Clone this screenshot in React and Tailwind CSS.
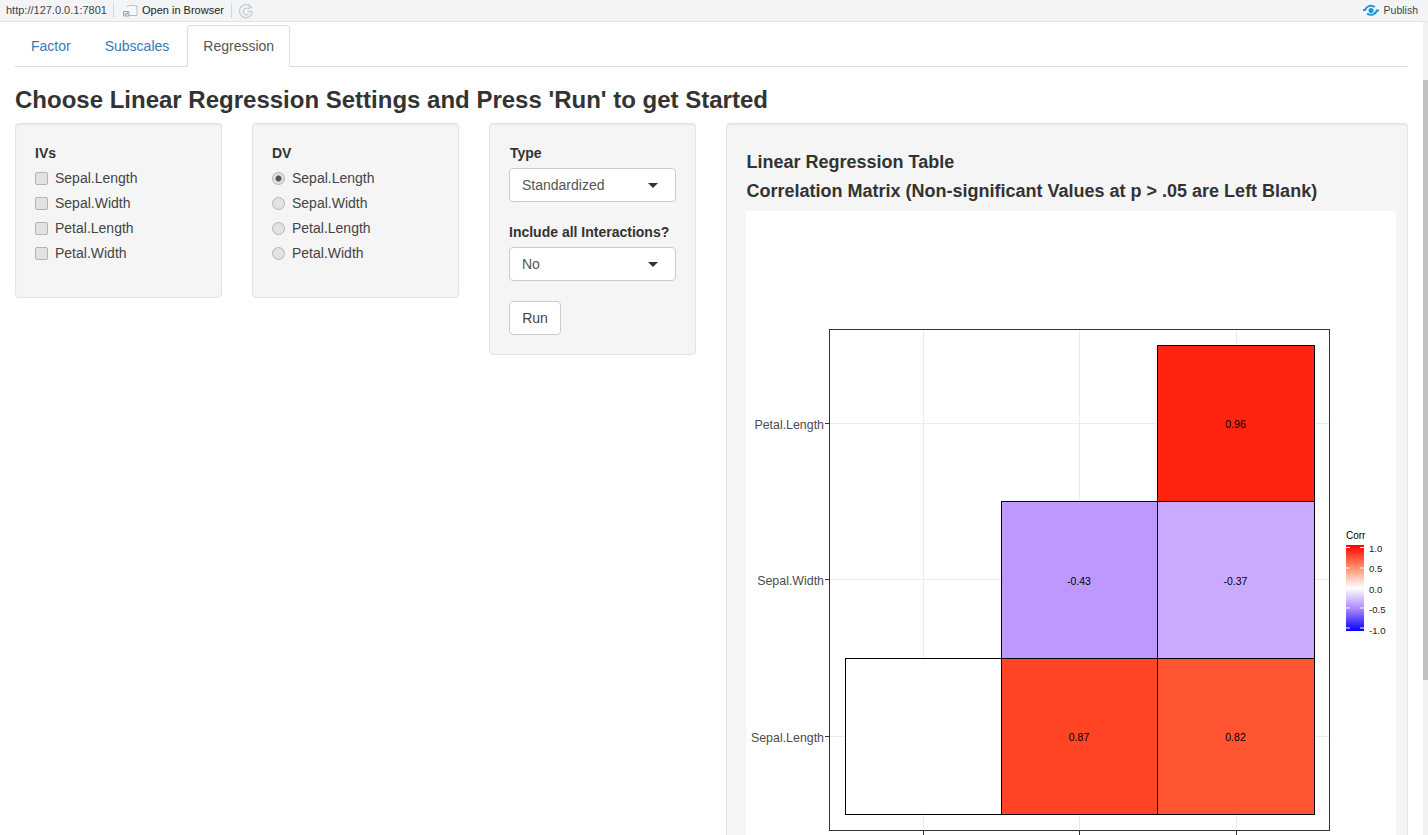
import React from 'react';

const variables = ['Sepal.Length', 'Sepal.Width', 'Petal.Length', 'Petal.Width'];

const Toolbar = () => (
  <div className="h-[22px] bg-[#f3f4f5] border-b border-[#e3e4e6] flex items-center text-[11px] text-[#222] shrink-0">
    <span className="ml-[6px] w-[100px] whitespace-nowrap text-[#444]">http://127.0.0.1:7801</span>
    <span className="ml-[7px] w-px h-[15px] bg-[#d5d6d8]" />
    {/* browser icon */}
    <svg width="16" height="14" viewBox="0 0 16 14" className="ml-[8px]" fill="none">
      <path d="M5 2.5 C6.5 1.2 12.5 1 15 2 L15 11.5 L5 11.5" stroke="#b3bec7" fill="#f7f9fa" />
      <path d="M1.5 7.5 h5.5 v4.5 h-5.5 z" stroke="#9aa7b1" fill="#dfe6ea" />
      <path d="M3 11 L6 8.5" stroke="#7f8e99" />
    </svg>
    <span className="ml-[4px] w-[82px] whitespace-nowrap">Open in Browser</span>
    <span className="ml-[7px] w-px h-[15px] bg-[#d5d6d8]" />
    {/* republish icon */}
    <svg width="16" height="16" viewBox="0 0 16 16" className="ml-[6px]" fill="none" stroke="#c6ccd1" strokeWidth="1.3">
      <path d="M13 4 A6.5 6.5 0 1 0 14.5 9" />
      <path d="M9.5 8.5 h5" />
      <path d="M10 1.5 L13.5 4.5 L9.5 5.5" />
      <path d="M9.5 5.5 A3.2 3.2 0 1 0 10.5 11" />
    </svg>
    <div className="ml-auto flex items-center mr-[10px]">
      <svg width="16" height="13" viewBox="0 0 16 13" fill="none" stroke="#1b95d6" strokeWidth="2">
        <path d="M0 6 H2 C4 1.5 8 0.5 12 3" />
        <path d="M16 6.5 H14 C12 11 8 12 4 9.5" />
        <circle cx="8" cy="6.5" r="2.5" fill="#1b95d6" stroke="none" />
      </svg>
      <span className="ml-[5px] text-[10.5px] text-[#444]">Publish</span>
    </div>
  </div>
);

const Tabs = () => (
  <div className="flex h-[42px] mt-[3px] border-b border-[#ddd] text-[14px] leading-[20px]">
    <a className="px-[16px] pt-[11px] mr-[2px] text-[#337ab7]">Factor</a>
    <a className="px-[16px] pt-[11px] mr-[2px] text-[#337ab7]">Subscales</a>
    <a className="h-[42px] px-[15px] pt-[10px] bg-white border border-[#ddd] border-b-transparent rounded-t-[4px] text-[#555]">Regression</a>
  </div>
);

const OptionGroup = ({ title, type }) => (
  <div className="w-[207px] h-[175px] shrink-0 bg-[#f5f5f5] border border-[#e3e3e3] rounded-[4px] pt-[19px] px-[19px] shadow-[inset_0_1px_1px_rgba(0,0,0,0.05)]">
    <div className="font-bold leading-[20px] mb-[5px]">{title}</div>
    <div className="flex flex-col gap-[5px]">
      {variables.map((v, i) => (
        <label key={v} className="flex items-center h-[20px] leading-[20px] text-[#444]">
          {type === 'radio' ? (
            <input
              type="radio"
              name="dv"
              defaultChecked={i === 0}
              className="appearance-none w-[13px] h-[13px] rounded-full border border-[#b4b4b4] bg-[#e2e2e2] checked:bg-[radial-gradient(circle,#555_0,#555_32%,#e0e0e0_45%)]"
            />
          ) : (
            <input
              type="checkbox"
              className="appearance-none w-[13px] h-[13px] rounded-[2px] border border-[#b4b4b4] bg-[#e2e2e2]"
            />
          )}
          <span className="ml-[7px]">{v}</span>
        </label>
      ))}
    </div>
  </div>
);

const FakeSelect = ({ value }) => (
  <div className="w-[167px] h-[34px] bg-white border border-[#ccc] rounded-[4px] flex items-center justify-between pl-[12px] pr-[17px] text-[#555]">
    <span>{value}</span>
    <span className="w-0 h-0 border-x-[5px] border-x-transparent border-t-[5px] border-t-[#333]" />
  </div>
);

const SettingsPanel = () => (
  <div className="w-[207px] h-[232px] shrink-0 bg-[#f5f5f5] border border-[#e3e3e3] rounded-[4px] pt-[19px] px-[19px] shadow-[inset_0_1px_1px_rgba(0,0,0,0.05)]">
    <div className="font-bold leading-[20px] mb-[5px] pl-px">Type</div>
    <FakeSelect value="Standardized" />
    <div className="font-bold leading-[20px] mt-[20px] mb-[5px]">Include all Interactions?</div>
    <FakeSelect value="No" />
    <button className="mt-[20px] w-[52px] h-[34px] bg-white border border-[#ccc] rounded-[4px] text-[#444]">Run</button>
  </div>
);

const tiles = [
  { x: 1157.5, y: 345.5, w: 157, h: 156, fill: '#ff2410', label: '0.96' },
  { x: 1001.5, y: 501.5, w: 156, h: 157, fill: '#bd98ff', label: '-0.43' },
  { x: 1157.5, y: 501.5, w: 157, h: 157, fill: '#c9aaff', label: '-0.37' },
  { x: 845.5, y: 658.5, w: 156, h: 156, fill: '#ffffff', label: '' },
  { x: 1001.5, y: 658.5, w: 156, h: 156, fill: '#ff4526', label: '0.87' },
  { x: 1157.5, y: 658.5, w: 157, h: 156, fill: '#ff5432', label: '0.82' },
];

const yAxis = [
  { y: 423.5, label: 'Petal.Length' },
  { y: 579.5, label: 'Sepal.Width' },
  { y: 736.5, label: 'Sepal.Length' },
];

const legendTicks = [
  { y: 547.5, text: 552, label: '1.0' },
  { y: 568, text: 571.5, label: '0.5' },
  { y: 588, text: 592.5, label: '0.0' },
  { y: 608, text: 613, label: '-0.5' },
  { y: 628, text: 633.5, label: '-1.0' },
];

// Correlation heatmap drawn in page coordinates
const CorrPlot = () => (
  <svg
    viewBox="746 211 650 650"
    className="block w-[650px] h-[650px] bg-white"
    fontFamily="'Liberation Sans', Arial, sans-serif"
  >
    <defs>
      <linearGradient id="corr" x1="0" y1="0" x2="0" y2="1">
        <stop offset="0" stopColor="#ff0000" />
        <stop offset="0.25" stopColor="#ff8a66" />
        <stop offset="0.5" stopColor="#ffffff" />
        <stop offset="0.75" stopColor="#a884ff" />
        <stop offset="1" stopColor="#0000ff" />
      </linearGradient>
    </defs>
    {[923.5, 1079.5, 1236.5].map((x) => (
      <line key={x} x1={x} x2={x} y1="329" y2="830" stroke="#ebebeb" />
    ))}
    {yAxis.map((a) => (
      <line key={a.y} x1="829" x2="1329" y1={a.y} y2={a.y} stroke="#ebebeb" />
    ))}
    {tiles.map((t) => (
      <g key={t.x + '-' + t.y}>
        <rect x={t.x} y={t.y} width={t.w} height={t.h} fill={t.fill} stroke="#000" />
        <text x={t.x + t.w / 2 - 0.5} y={t.y + t.h / 2 + 4.5} textAnchor="middle" fontSize="10.5" fill="#000">{t.label}</text>
      </g>
    ))}
    <rect x="829.5" y="329.5" width="500" height="501" fill="none" stroke="#333" />
    {yAxis.map((a) => (
      <g key={a.label}>
        <line x1="825" x2="829" y1={a.y} y2={a.y} stroke="#333" />
        <text x="824" y={a.y + 5} textAnchor="end" fontSize="12.4" fill="#4d4d4d">{a.label}</text>
      </g>
    ))}
    {[923.5, 1079.5, 1236.5].map((x) => (
      <line key={x} x1={x} x2={x} y1="831" y2="835" stroke="#333" />
    ))}
    <text x="1346" y="539" fontSize="10" fill="#000">Corr</text>
    <rect x="1346" y="545" width="18" height="86" fill="url(#corr)" />
    {legendTicks.map((t) => (
      <g key={t.label}>
        <line x1="1346" x2="1350" y1={t.y} y2={t.y} stroke="#fff" />
        <line x1="1360" x2="1364" y1={t.y} y2={t.y} stroke="#fff" />
        <text x="1369" y={t.text} fontSize="9.6" fill="#222">{t.label}</text>
      </g>
    ))}
  </svg>
);

const ResultsPanel = () => (
  <div className="w-[682px] h-[760px] shrink-0 bg-[#f5f5f5] border border-[#e3e3e3] rounded-[4px] pl-[19.5px] pt-[28.5px] shadow-[inset_0_1px_1px_rgba(0,0,0,0.05)]">
    <h4 className="text-[18px] leading-[19.8px] font-bold">Linear Regression Table</h4>
    <h4 className="mt-[9.5px] mb-[8.5px] text-[18px] leading-[19.8px] font-bold">Correlation Matrix (Non-significant Values at p &gt; .05 are Left Blank)</h4>
    <div className="-ml-[0.5px]">
      <CorrPlot />
    </div>
  </div>
);

export default function App() {
  return (
    <div className="relative h-[835px] w-[1428px] overflow-hidden bg-white flex flex-col font-['Liberation_Sans',Arial,sans-serif] text-[14px] text-[#333]">
      <Toolbar />
      <div className="px-[15px] w-[1423px]">
        <Tabs />
        <h3 className="mt-[20px] mb-[10px] text-[24px] leading-[26.4px] font-bold">Choose Linear Regression Settings and Press 'Run' to get Started</h3>
        <div className="flex items-start gap-[30px]">
          <OptionGroup title="IVs" type="checkbox" />
          <OptionGroup title="DV" type="radio" />
          <SettingsPanel />
          <ResultsPanel />
        </div>
      </div>
      {/* page scrollbar */}
      <div className="absolute right-0 top-[22px] bottom-0 w-[5px] bg-[#f1f1f1]">
        <div className="mt-[58px] h-[600px] bg-[#c1c1c1]" />
      </div>
    </div>
  );
}
